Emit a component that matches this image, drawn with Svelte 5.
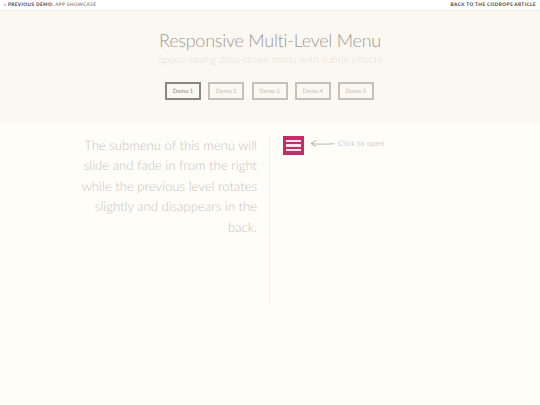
<script>
	const demos = ['Demo 1', 'Demo 2', 'Demo 3', 'Demo 4', 'Demo 5'];
</script>

<div class="page">
	<div class="topbar">
		<a href="#prev"><span class="arrow">«</span> <strong>Previous Demo:</strong> App Showcase</a>
		<a class="back" href="#back"><strong>Back to the Codrops Article</strong></a>
	</div>

	<header>
		<h1>Responsive Multi-Level Menu</h1>
		<h2>Space-saving drop-down menu with subtle effects</h2>
		<nav>
			{#each demos as demo, i}
				<a href="#demo" class:current={i === 0}>{demo}</a>
			{/each}
		</nav>
	</header>

	<main>
		<p class="info">The submenu of this menu will slide and fade in from the right while the previous level rotates slightly and disappears in the back.</p>
		<div class="side">
			<button class="trigger" aria-label="Open menu"><span></span><span></span><span></span></button>
			<svg class="hint-arrow" width="25" height="10" viewBox="0 0 25 10">
				<path d="M6 1.5 L1 4.5 L6 7.5 M1.5 4.6 C8 5.4 16 5.2 24 4.8" fill="none" stroke="#a9a69f" stroke-width="0.8" stroke-linecap="round" />
			</svg>
			<span class="hint">Click to open</span>
		</div>
	</main>
</div>

<style>
	:global(body) {
		margin: 0;
		background: #fffdf7;
		font-family: Lato, "Liberation Sans", sans-serif;
		text-rendering: geometricPrecision;
	}

	.page {
		width: 540px;
		height: 405px;
		overflow: hidden;
		background: #fffdf7;
	}

	.topbar {
		height: 10px;
		display: flex;
		justify-content: space-between;
		align-items: center;
		padding: 0 4px;
		background: #fff;
		border-bottom: 1px solid #efeee9;
		font-size: 4.8px;
		letter-spacing: 0.35px;
		text-transform: uppercase;
	}

	.topbar a {
		color: #6b6862;
		text-decoration: none;
	}

	.topbar .back {
		letter-spacing: 0.38px;
	}

	.topbar strong {
		color: #3f3d39;
		font-weight: 700;
	}

	header {
		height: 112px;
		background: #fbf8f1;
		text-align: center;
		display: flex;
		flex-direction: column;
		align-items: center;
	}

	h1 {
		margin: 18px 0 0;
		font-size: 18px;
		line-height: 22px;
		font-weight: 300;
		letter-spacing: -0.25px;
		color: #9c9a94;
	}

	h2 {
		margin: 2px 0 0;
		font-size: 10.4px;
		line-height: 15px;
		font-weight: 300;
		color: #dfddd6;
	}

	nav {
		display: flex;
		gap: 7.25px;
		margin: 14px 1px 0 0;
	}

	nav a {
		width: 36px;
		height: 18px;
		box-sizing: border-box;
		display: flex;
		align-items: center;
		justify-content: center;
		border: 2px solid #c4c1b8;
		font-size: 5.8px;
		color: #c0bdb5;
		text-decoration: none;
	}

	nav a.current {
		border-color: #8a877f;
		color: #8d8a83;
	}

	main {
		display: flex;
		align-items: flex-start;
		padding-top: 12px;
	}

	.info {
		width: 257px;
		height: 169px;
		margin: 0;
		box-sizing: border-box;
		padding-left: 72px;
		text-align: right;
		font-size: 13.1px;
		line-height: 20.4px;
		font-weight: 300;
		color: #c6c4be;
	}

	.side {
		margin: 1px 0 0 12px;
		padding-left: 13px;
		height: 168px;
		border-left: 1px solid #efeee8;
		display: flex;
		align-items: flex-start;
		gap: 6px;
	}

	.trigger {
		width: 21px;
		height: 19px;
		margin: 0;
		padding: 4px 3px;
		border: 0;
		background: #c42d68;
		display: flex;
		flex-direction: column;
		justify-content: space-between;
		box-sizing: border-box;
	}

	.trigger span {
		display: block;
		height: 2.4px;
		background: #f8e3ea;
	}

	.hint-arrow {
		margin-top: 3px;
	}

	.hint {
		margin: 2px 0 0 -3px;
		font-size: 7.5px;
		line-height: 11px;
		font-weight: 300;
		letter-spacing: 0.3px;
		color: #a5a39d;
	}
</style>
